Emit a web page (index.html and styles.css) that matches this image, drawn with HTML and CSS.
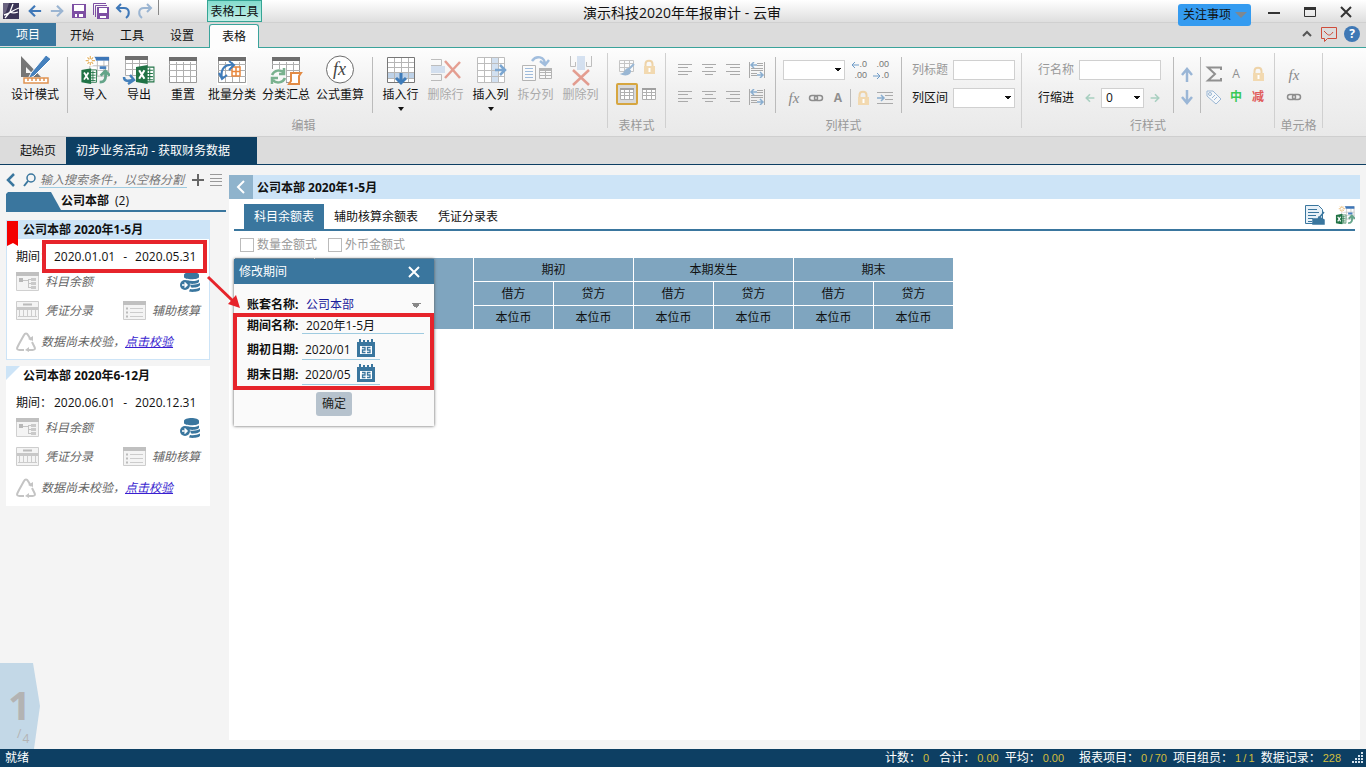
FILE: index.html
```html
<!DOCTYPE html>
<html lang="zh-CN">
<head>
<meta charset="utf-8">
<title>演示科技2020年年报审计 - 云审</title>
<link rel="stylesheet" href="styles.css">
</head>
<body>
<svg class="defs" aria-hidden="true">
  <defs>
    <symbol id="i-left" viewBox="0 0 16 16"><path d="M15 8H2M8 2L2 8l6 6" fill="none" stroke="currentColor" stroke-width="2.500"/></symbol>
    <symbol id="i-right" viewBox="0 0 16 16"><path d="M1 8h13M8 2l6 6-6 6" fill="none" stroke="currentColor" stroke-width="2.500"/></symbol>
    <symbol id="i-undo" viewBox="0 0 16 16"><path d="M6 1L2 5l4 4M2 5h7c6 0 6 7 2 10" fill="none" stroke="currentColor" stroke-width="2"/></symbol>
    <symbol id="i-redo" viewBox="0 0 16 16"><path d="M10 1l4 4-4 4M14 5H7c-6 0-6 7-2 10" fill="none" stroke="currentColor" stroke-width="2"/></symbol>
    <symbol id="i-sheet" viewBox="0 0 30 30"><path d="M1.500 2.500h27v25h-27z" fill="#fff" stroke="#999"/><path d="M1 9.500h28M1 15.500h28M1 21.500h28M8.500 7v20M15.500 7v20M22.500 7v20" stroke="#b0b0b0"/><path d="M1 2h28v4H1z" fill="#6e6e6e"/></symbol>
    <symbol id="i-excel" viewBox="0 0 18 18"><path d="M8 2h9v14H8z" fill="#fff" stroke="#217346"/><path d="M10 5h6M10 8h6M10 11h6M10 14h6M13 3v12" stroke="#217346"/><path d="M0 2l11-2v18L0 16z" fill="#217346"/><path d="M3 5l5 8M8 5l-5 8" stroke="#fff" stroke-width="2"/></symbol>
    <symbol id="i-lock" viewBox="0 0 16 16"><path d="M4.500 8V5c0-4.500 7-4.500 7 0v3" fill="none" stroke="#eed3a8" stroke-width="2"/><path d="M3 7h11v8H3z" fill="#f2d9b0"/><path d="M8.500 9v4" stroke="#fff" stroke-width="2"/></symbol>
    <symbol id="i-al" viewBox="0 0 16 16"><path d="M1 2.500h14M1 5.500h10M1 9.500h14M1 12.500h10" stroke="#aaa"/></symbol>
    <symbol id="i-ac" viewBox="0 0 16 16"><path d="M1 2.500h14M4 5.500h8M1 9.500h14M4 12.500h8" stroke="#aaa"/></symbol>
    <symbol id="i-ar" viewBox="0 0 16 16"><path d="M1 2.500h14M5 5.500h10M1 9.500h14M5 12.500h10" stroke="#aaa"/></symbol>
    <symbol id="i-aw" viewBox="0 0 16 16"><path d="M.5 0v16M15.500 0v16M8 1.500h6M8 3.500h6M2 6.500h12M2 8.500h12M2 11.500h6M2 13.500h6" stroke="#aaa"/><path d="M8 3H2M5 0L2 3l3 3M8 13h6M11 10l3 3-3 3" fill="none" stroke="#8aaed0" stroke-width="1.500"/></symbol>
    <symbol id="i-link" viewBox="0 0 16 16"><rect x="1.500" y="5.500" width="8" height="5" rx="2.500" fill="none" stroke="#8d8d8d" stroke-width="1.500"/><rect x="6.500" y="5.500" width="8" height="5" rx="2.500" fill="none" stroke="#8d8d8d" stroke-width="1.500"/></symbol>
    <symbol id="i-grid" viewBox="0 0 16 16"><path d="M1.500 2.500h13v11h-13zM1 6.500h13M1 9.500h13M5.500 3v11M10.500 3v11" fill="#fff" stroke="#b0b0b0"/><path d="M1 2h14v2H1z" fill="#a0a0a0"/></symbol>
    <symbol id="i-subject" viewBox="0 0 24 20"><path d="M.5.500h22v18h-22z" fill="#f4f4f4" stroke="#d0d0d0"/><path d="M0 0h23v4H0z" fill="#c0c0c0"/><path d="M3 6h4v4H3z" fill="#b8b8b8"/><path d="M7 8.500h5M12.500 7v8.500M12 7.500h3M12 15.500h3M12 11.500h3" fill="none" stroke="#c4c4c4"/><path d="M15 6h5v3h-5zM15 10h5v3h-5zM15 14h5v3h-5z" fill="#cacaca"/></symbol>
    <symbol id="i-voucher" viewBox="0 0 24 20"><path d="M.5.500h22v18h-22z" fill="#f4f4f4" stroke="#cdcdcd"/><path d="M7 3.500h9" stroke="#bbb" stroke-width="2"/><path d="M1 6h21v3H1z" fill="#c8c8c8"/><path d="M3.500 9v7M7.500 9v7M11.500 9v7M15.500 9v7M19.500 9v7M2 15.500h19" stroke="#ccc"/></symbol>
    <symbol id="i-assist" viewBox="0 0 24 20"><path d="M.5.500h22v18h-22z" fill="#f4f4f4" stroke="#cdcdcd"/><path d="M0 0h23v4H0z" fill="#c0c0c0"/><path d="M3 7.500h2M3 11.500h2M3 15.500h2" stroke="#bbb" stroke-width="2"/><path d="M7 7.500h13M7 11.500h13M7 15.500h13" stroke="#ccc"/></symbol>
    <symbol id="i-recycle" viewBox="0 0 20 20"><path d="M3 12L8 3c1-2 3-2 4 0l3 5M16 10l2.500 5c1 2 0 3-2 3H12M8 18H3.500c-2 0-3-1-2-3L3 12" fill="none" stroke="#c4c4c4" stroke-width="2"/><path d="M17 4v5l-5-2zM13 15v5l-4-2z" fill="#c4c4c4"/></symbol>
    <symbol id="i-coins" viewBox="0 0 20 20"><path d="M4 3c0-4 15-4 15 0v2c0 3-15 3-15 0zM7 8c4 1.500 8 1.500 12-.5v2c0 2-6 3-10 2zM10 12.500c4 .5 7 0 10-1.500v2c0 2-6 3-9 2.500zM10 17c4 .5 7 0 10-1.500v2c0 2-7 3-11 2z" fill="#3a769e"/><circle cx="5" cy="13" r="5" fill="#3a769e"/><path d="M2 13h5M4.500 10.500L7 13l-2.500 2.500" fill="none" stroke="#fff" stroke-width="1.500"/></symbol>
    <symbol id="i-cal" viewBox="0 0 18 18"><path d="M0 3h2V0h2v3h2V1h2v2h2V1h2v2h2V0h2v3h2v15H0z" fill="#3a769e"/><path d="M3 7h12v8H3z" fill="#fff"/><path d="M5 8.500h3v2.500H5.500v2.500H8.500M13.500 8.500H10.500v2.500h2.500v2.500h-3" fill="none" stroke="#3a769e" stroke-width="1.300"/></symbol>
    <symbol id="i-import" viewBox="0 0 32 30"><path d="M10.500 1.500h20v20h-20z" fill="#fff" stroke="#aaa"/><path d="M11 10.500h20M11 15.500h20M18.500 5v16M25.500 5v16" stroke="#bbb"/><path d="M15 1h16v4H15z" fill="#3d76b8"/><path d="M21 11h7v3h-7z" fill="#4a82c0"/><circle cx="11" cy="5" r="6" fill="#fff"/><path d="M11 0v10M6 5h10M8 1.500l6 7M14 1.500l-6 7" stroke="#e6b466" stroke-width="1.300"/><circle cx="11" cy="5" r="1.800" fill="#fff"/><use href="#i-excel" x="0" y="13" width="20" height="17"/><path d="M21 28c6 0 7-4 6-11M22 21l5-5 5 5" fill="none" stroke="#64a489" stroke-width="3"/></symbol>
  </defs>
</svg>

<header class="titlebar">
  <div class="quick">
    <svg class="s18" viewBox="0 0 18 18"><path d="M1 1h16v16H1z" fill="#3b3556"/><path d="M1 1h6L4 10l-3 3z" fill="#6a6380"/><path d="M2 13c5-1 9-5 15-7M11 2L8 10 3 16M8 10c2 1 5 1 8 0" stroke="#fff" fill="none" stroke-width="1.300"/></svg>
    <button class="qbtn blue" aria-label="后退"><svg class="s14"><use href="#i-left"/></svg></button>
    <button class="qbtn pale" aria-label="前进"><svg class="s14"><use href="#i-right"/></svg></button>
    <button class="qbtn" aria-label="保存"><svg class="s16" viewBox="0 0 16 16"><path d="M1 1h14v14H1z" fill="#7d4fa3"/><path d="M3 2h10v6H3zM4 11h8v3H4z" fill="#fff"/><path d="M6 11h2v3H6z" fill="#7d4fa3"/></svg></button>
    <button class="qbtn" aria-label="全部保存"><svg class="s18" viewBox="0 0 18 18"><path d="M1.500 13V1.500H14M3.500 15V3.500H15" fill="none" stroke="#7d4fa3"/><path d="M5 5h12v12H5z" fill="#7d4fa3"/><path d="M7 6h8v5H7zM8 14h6v2H8z" fill="#fff"/></svg></button>
    <button class="qbtn blue" aria-label="撤销"><svg class="s16"><use href="#i-undo"/></svg></button>
    <button class="qbtn pale" aria-label="重做"><svg class="s16"><use href="#i-redo"/></svg></button>
    <span class="qsep"></span>
  </div>
  <div class="context">表格工具</div>
  <h1 class="apptitle">演示科技2020年年报审计 - 云审</h1>
  <div class="window">
    <button class="notice">关注事项<span class="tri"></span></button>
    <button aria-label="最小化"><svg class="s14" viewBox="0 0 14 14"><path d="M1 8h12" stroke="#333" stroke-width="2"/></svg></button>
    <button aria-label="最大化"><svg class="s14" viewBox="0 0 14 14"><path d="M1.500 2.500h11v9h-11z" fill="none" stroke="#333"/><path d="M1 2h12v3H1z" fill="#333"/></svg></button>
    <button aria-label="关闭"><svg class="s14" viewBox="0 0 14 14"><path d="M2 2l10 10M12 2L2 12" stroke="#333" stroke-width="2"/></svg></button>
  </div>
</header>

<nav class="menu">
  <button class="project">项目</button>
  <button>开始</button>
  <button>工具</button>
  <button>设置</button>
  <button class="current">表格</button>
  <div class="help">
    <svg class="s14" viewBox="0 0 14 14"><path d="M3 9l4-4 4 4" fill="none" stroke="#555" stroke-width="2"/></svg>
    <svg class="s16" viewBox="0 0 16 16"><path d="M.5 1.500h15v11h-9l-3 3v-3h-3z" fill="none" stroke="#cf4c3a"/><path d="M3 5l3 3c2 2 4 1 6-2" fill="none" stroke="#cf4c3a"/></svg>
    <span class="question">?</span>
  </div>
</nav>

<section class="ribbon">
  <div class="group">
    <div class="tools">
      <button class="big wide"><svg viewBox="0 0 30 30"><path d="M1 1v21h20zM6 12l6 6H6z" fill="#767676" fill-rule="evenodd"/><path d="M26 0l5 4-17 17-6 3 3-6z" fill="#4681bd" stroke="#fff"/><path d="M4 23h24v5H4zM8 23v3M12 23v3M16 23v3M20 23v3M24 23v3" fill="#fff" stroke="#df9251" stroke-width="1.500"/></svg>设计模式</button>
      <span class="sep"></span>
      <button class="big"><svg viewBox="0 0 32 30"><use href="#i-import"/></svg>导入</button>
      <button class="big"><svg viewBox="0 0 30 30"><path d="M1.500 1.500h22v19h-22zM2 8.500h22M2 14.500h22M8.500 1v20M15.500 1v20" fill="#fff" stroke="#b0b0b0"/><path d="M1 1h23v4H1z" fill="#6e6e6e"/><use href="#i-excel" x="12" y="10" width="19" height="19"/><path d="M0 22c0 5 5 4 9 3M6 20l4 5-6 4" fill="none" stroke="#4480bb" stroke-width="2.500"/></svg>导出</button>
      <button class="big"><svg><use href="#i-sheet"/></svg>重置</button>
      <button class="big wide"><svg viewBox="0 0 30 30"><path d="M0 0h30v30H0z" fill="#fff"/><use href="#i-sheet"/><path d="M15 12h8v9h-8zM19 12v9M15 16.500h8" fill="#fff" stroke="#e8873d" stroke-width="1.500"/><path d="M5 23C3 14 8 9 16 10M12 6l5 4-5 5M2 18l3 6 5-4" fill="none" stroke="#3f7cba" stroke-width="2"/></svg>批量分类</button>
      <button class="big wide"><svg viewBox="0 0 30 30"><use href="#i-sheet"/><path d="M0 14h15v16H0z" fill="#f8f8f8"/><path d="M1 20c2-5 9-6 12-2M13 13v6H8M14 23c-2 5-9 6-12 2M1 29v-6h6" fill="none" stroke="#7ab28f" stroke-width="2.500"/><path d="M20 18h10l-2 3v8H18l2-3z" fill="#fff" stroke="#e28b45" stroke-width="2"/></svg>分类汇总</button>
      <button class="big wide"><svg viewBox="0 0 30 30"><circle cx="15" cy="14.500" r="13.500" fill="#fff" stroke="#6c6c6c"/><text x="8" y="20" class="fx-big">fx</text></svg>公式重算</button>
      <span class="sep"></span>
      <button class="big col"><svg viewBox="0 0 30 30"><path d="M1 2h28v26H1z" fill="#fff"/><path d="M1 17h28v6H1z" fill="#bed2e8"/><path d="M1 7.500h28M1 12.500h28M1 17.500h28M1 23.500h28M8.500 2v26M15.500 2v26M22.500 2v26" stroke="#b5b5b5"/><path d="M1.500 2.500h27v25h-27z" fill="none" stroke="#777"/><path d="M15 18v9M10 23l5 5 5-5" fill="none" stroke="#3f7cba" stroke-width="3"/></svg>插入行<i class="drop"></i></button>
      <button class="big col off"><svg viewBox="0 0 30 30"><path d="M0 4.500h10.500v6H0M0 25.500h10.500v-6H0" fill="none" stroke="#777"/><path d="M0 11h14v7H0z" fill="#a9c4e6"/><path d="M14 6l15 17M29 7L14 23" stroke="#cf3418" stroke-width="2.500"/></svg>删除行</button>
      <button class="big col"><svg viewBox="0 0 30 30"><path d="M1 2h28v26H1z" fill="#fff"/><path d="M15 2h7v26h-7z" fill="#d2e0f0"/><path d="M1.500 2.500h27v25h-27zM1 8.500h28M1 15.500h28M1 21.500h28M8.500 2v26M15.500 2v26M22.500 2v26" fill="none" stroke="#bdbdbd"/><path d="M19 15h9M24 10l5 5-5 5" fill="none" stroke="#7ba6d1" stroke-width="2.500"/></svg>插入列<i class="drop"></i></button>
      <button class="big col off"><svg viewBox="0 0 30 30"><path d="M1.500 10.500h13v15h-13z" fill="#fff" stroke="#666"/><path d="M4 13.500h8M4 16.500h8M4 19.500h8M4 22.500h8" stroke="#3876bd"/><path d="M18.500 13.500h12v10h-12zM18 17.500h12M18 20.500h12M24.500 14v10" fill="#fff" stroke="#666"/><path d="M18 13h13v3H18z" fill="#666"/><path d="M11 6c4-6 13-5 13 4M19 6l5 4 4-5" fill="none" stroke="#3876bd" stroke-width="2.500"/></svg>拆分列</button>
      <button class="big col off"><svg viewBox="0 0 30 30"><path d="M4.500 1v10.500h5V7M20.500 7v4.500h5V1" fill="none" stroke="#777"/><path d="M11 1h8v14h-8z" fill="#a9c4e6"/><path d="M7 15l16 15M23 15L7 30" stroke="#cf3418" stroke-width="2.500"/></svg>删除列</button>
    </div>
    <div class="caption">编辑</div>
  </div>

  <div class="group">
    <div class="tools tablestyle">
      <button class="ib off" aria-label="表格样式"><svg viewBox="0 0 16 16"><path d="M.5 1.500h14v11H.5zM0 4.500h15M0 8.500h12M5.500 1v11M10.500 1v9" fill="#fff" stroke="#888"/><path d="M15 5l-6 6M9 10c-3 0-2 4-5 5 3 1 7 0 7-3z" fill="#2b6cab" stroke="#2b6cab" stroke-width="2"/></svg></button>
      <button class="ib" aria-label="锁定"><svg><use href="#i-lock"/></svg></button>
      <button class="ib chosen" aria-label="显示网格"><svg><use href="#i-grid"/></svg></button>
      <button class="ib" aria-label="隐藏网格"><svg><use href="#i-grid"/></svg></button>
    </div>
    <div class="caption">表样式</div>
  </div>

  <div class="group">
    <div class="tools colstyle">
      <div class="aligns">
        <button class="ib"><svg><use href="#i-al"/></svg></button><button class="ib"><svg><use href="#i-ac"/></svg></button><button class="ib"><svg><use href="#i-ar"/></svg></button><button class="ib"><svg><use href="#i-aw"/></svg></button>
        <button class="ib"><svg><use href="#i-al"/></svg></button><button class="ib"><svg><use href="#i-ac"/></svg></button><button class="ib"><svg><use href="#i-ar"/></svg></button><button class="ib"><svg><use href="#i-aw"/></svg></button>
      </div>
      <span class="sep"></span>
      <div class="stack format">
        <div class="line">
          <select class="sel w62" aria-label="数字格式"><option></option></select>
          <button class="ib decimal"><span><svg viewBox="0 0 8 6"><path d="M8 3H1M4 0L1 3l3 3" fill="none" stroke="#6f9cc8"/></svg>.0</span><span>.00</span></button>
          <button class="ib decimal"><span>.00</span><span><svg viewBox="0 0 8 6"><path d="M0 3h7M4 0l3 3-3 3" fill="none" stroke="#6f9cc8"/></svg>.0</span></button>
        </div>
        <div class="line">
          <button class="ib fx">fx</button><button class="ib"><svg><use href="#i-link"/></svg></button><button class="ib letter bold">A</button>
          <span class="sep short"></span>
          <button class="ib"><svg><use href="#i-lock"/></svg></button>
          <button class="ib"><svg viewBox="0 0 16 16"><path d="M0 2.500h16M8 5.500h8M8 9.500h8M0 13.500h16" stroke="#aaa"/><path d="M0 8h7M4 5l3 3-3 3" fill="none" stroke="#8aaed0" stroke-width="1.500"/></svg></button>
        </div>
      </div>
      <span class="sep"></span>
      <div class="stack fields">
        <div class="line"><label class="dim" for="coltitle">列标题</label><input id="coltitle" class="box w62"></div>
        <div class="line"><label for="colrange">列区间</label><select id="colrange" class="sel w62"><option></option></select></div>
      </div>
    </div>
    <div class="caption">列样式</div>
  </div>

  <div class="group">
    <div class="tools rowstyle">
      <div class="stack fields">
        <div class="line"><label class="dim" for="rowname">行名称</label><input id="rowname" class="box w82"></div>
        <div class="line"><label for="indent">行缩进</label><button class="ib mint" aria-label="减少缩进"><svg class="s10"><use href="#i-left"/></svg></button><select id="indent" class="sel w42"><option>0</option></select><button class="ib mint" aria-label="增加缩进"><svg class="s10"><use href="#i-right"/></svg></button></div>
      </div>
      <span class="sep"></span>
      <div class="updown">
        <button class="ib"><svg viewBox="0 0 16 16"><path d="M8 15V3M3 8l5-6 5 6" fill="none" stroke="#9ab6d6" stroke-width="2.500"/></svg></button>
        <button class="ib"><svg viewBox="0 0 16 16"><path d="M8 1v12M3 8l5 6 5-6" fill="none" stroke="#9ab6d6" stroke-width="2.500"/></svg></button>
      </div>
      <span class="sep"></span>
      <div class="marks">
        <button class="ib"><svg viewBox="0 0 16 16"><path d="M15 4V1.500H2L9 8l-7 6.500h13V12" fill="none" stroke="#909090" stroke-width="2"/></svg></button>
        <button class="ib letter">A</button>
        <button class="ib"><svg><use href="#i-lock"/></svg></button>
        <button class="ib"><svg viewBox="0 0 16 16"><path d="M1 2h6l8 8-5 5-9-8zM6 9l3-3M8 11l3-3" fill="#f4f7fa" stroke="#9bb7d4"/><circle cx="4" cy="5" r="1.500" fill="none" stroke="#9bb7d4"/></svg></button>
        <button class="ib green">中</button>
        <button class="ib red">减</button>
      </div>
    </div>
    <div class="caption">行样式</div>
  </div>

  <div class="group">
    <div class="tools cellstyle">
      <button class="ib fx">fx</button>
      <button class="ib"><svg><use href="#i-link"/></svg></button>
    </div>
    <div class="caption">单元格</div>
  </div>
</section>

<nav class="pages">
  <button>起始页</button>
  <button class="active">初步业务活动 - 获取财务数据</button>
</nav>

<main class="main">
  <aside class="side">
    <div class="search">
      <button class="chev" aria-label="收起"><svg viewBox="0 0 10 14"><path d="M8 1L2 7l6 6" fill="none" stroke="#3a769e" stroke-width="2.500"/></svg></button>
      <svg class="s14" viewBox="0 0 14 14"><circle cx="8" cy="5" r="4" fill="none" stroke="#3a769e" stroke-width="1.500"/><path d="M5 8l-4 5" stroke="#3a769e" stroke-width="2"/></svg>
      <input aria-label="搜索" placeholder="输入搜索条件，以空格分割">
      <button class="plus" aria-label="新增"><svg class="s12" viewBox="0 0 12 12"><path d="M6 0v12M0 6h12" stroke="#666" stroke-width="2"/></svg></button>
      <button aria-label="菜单"><svg class="s12" viewBox="0 0 12 12"><path d="M0 .5h12M0 4.500h12M0 7.500h12M0 11.500h12" stroke="#999"/></svg></button>
    </div>
    <div class="unit"><span class="flag"></span><b>公司本部</b><span>(2)</span></div>

    <article class="card picked">
      <svg class="ribbonmark" viewBox="0 0 11 26"><path d="M0 0h11v25l-5-3-6 3z" fill="#f40000"/></svg>
      <h2>公司本部 2020年1-5月</h2>
      <div class="period"><span>期间：</span><span>2020.01.01</span><span>-</span><span>2020.05.31</span><i class="mark date"></i></div>
      <div class="row short"><svg class="doc"><use href="#i-subject"/></svg><span>科目余额</span><svg class="coins"><use href="#i-coins"/></svg></div>
      <div class="row"><svg class="doc"><use href="#i-voucher"/></svg><span>凭证分录</span><svg class="doc second"><use href="#i-assist"/></svg><span>辅助核算</span></div>
      <div class="row check"><svg class="cycle"><use href="#i-recycle"/></svg><span>数据尚未校验，<a href="#">点击校验</a></span></div>
    </article>

    <article class="card">
      <span class="corner"></span>
      <h2>公司本部 2020年6-12月</h2>
      <div class="period"><span>期间：</span><span>2020.06.01</span><span>-</span><span>2020.12.31</span></div>
      <div class="row short"><svg class="doc"><use href="#i-subject"/></svg><span>科目余额</span><svg class="coins"><use href="#i-coins"/></svg></div>
      <div class="row"><svg class="doc"><use href="#i-voucher"/></svg><span>凭证分录</span><svg class="doc second"><use href="#i-assist"/></svg><span>辅助核算</span></div>
      <div class="row check"><svg class="cycle"><use href="#i-recycle"/></svg><span>数据尚未校验，<a href="#">点击校验</a></span></div>
    </article>

    <div class="pager"><b>1</b><div class="total"><span>/</span><span class="count">4</span></div></div>
  </aside>

  <section class="panel">
    <div class="heading">
      <button aria-label="返回"><svg viewBox="0 0 10 14"><path d="M8 1L2 7l6 6" fill="none" stroke="#fff" stroke-width="2"/></svg></button>
      <h2>公司本部 2020年1-5月</h2>
    </div>
    <div class="tabs">
      <button class="on">科目余额表</button>
      <button>辅助核算余额表</button>
      <button>凭证分录表</button>
      <div class="actions">
        <button aria-label="编辑报表"><svg viewBox="0 0 20 20"><path d="M.5.500h13l4 4v14H.5z" fill="#e8f1f8" stroke="#3a769e"/><path d="M3 4.500h9M3 7.500h11M3 10.500h8M3 13.500h5M3 16.500h4" stroke="#3a769e"/><path d="M19 7l-5 6M8 14h5l1-2 5 3v4H8z" fill="#3a769e" stroke="#3a769e" stroke-width="1.500"/></svg></button>
        <button aria-label="导入数据"><svg viewBox="0 0 32 30"><use href="#i-import"/></svg></button>
      </div>
    </div>
    <div class="options">
      <label><input type="checkbox">数量金额式</label>
      <label><input type="checkbox">外币金额式</label>
    </div>
    <table class="ledger">
      <colgroup><col><col class="name"><col><col><col><col><col><col></colgroup>
      <thead>
        <tr><th rowspan="3"></th><th rowspan="3"></th><th colspan="2">期初</th><th colspan="2">本期发生</th><th colspan="2">期末</th></tr>
        <tr><th>借方</th><th>贷方</th><th>借方</th><th>贷方</th><th>借方</th><th>贷方</th></tr>
        <tr><th>本位币</th><th>本位币</th><th>本位币</th><th>本位币</th><th>本位币</th><th>本位币</th></tr>
      </thead>
    </table>

    <form class="dialog">
      <div class="dhead"><span>修改期间</span><button type="button" aria-label="关闭"><svg class="s12" viewBox="0 0 12 12"><path d="M1 1l10 10M11 1L1 11" stroke="#fff" stroke-width="2"/></svg></button></div>
      <div class="field first"><label for="book">账套名称:</label><select id="book" class="book"><option>公司本部</option></select></div>
      <div class="field name"><label for="pname">期间名称:</label><input id="pname" class="long" value="2020年1-5月"></div>
      <div class="field"><label for="from">期初日期:</label><span class="datebox"><input id="from" value="2020/01"><svg><use href="#i-cal"/></svg></span></div>
      <div class="field"><label for="to">期末日期:</label><span class="datebox"><input id="to" value="2020/05"><svg><use href="#i-cal"/></svg></span></div>
      <button type="button" class="ok">确定</button>
      <i class="mark fields-mark"></i>
      <svg class="pointer" viewBox="0 0 36 36"><path d="M2 2l26 25" stroke="#e6242b" stroke-width="3"/><path d="M34 33l-12-4 8-9z" fill="#e6242b"/></svg>
    </form>
  </section>
</main>

<footer class="status">
  <span class="ready">就绪</span>
  <span class="stat">计数：<b>0</b></span>
  <span class="stat near">合计：<b>0.00</b></span>
  <span class="stat">平均：<b>0.00</b></span>
  <span class="stat far">报表项目：<b>0&thinsp;/&thinsp;70</b></span>
  <span class="stat">项目组员：<b>1&thinsp;/&thinsp;1</b></span>
  <span class="stat">数据记录：<b>228</b></span>
  <svg class="grip" viewBox="0 0 12 12"><path d="M9 1h2M9 4h2M6 4h2M9 7h2M6 7h2M3 7h2M9 10h2M6 10h2M3 10h2M0 10h2" stroke="#d5e3ee" stroke-width="2"/></svg>
</footer>
</body>
</html>
```

FILE: styles.css
```css
* { box-sizing: border-box; }
body {
  margin: 0;
  min-height: 100vh;
  display: flex;
  flex-direction: column;
  background: #f4f4f4;
  color: #111;
  font: 12px/16px "Open Sans", "Noto Sans CJK SC", sans-serif;
}
button, input, select { font: inherit; color: inherit; margin: 0; padding: 0; }
button { border: 0; background: none; white-space: nowrap; }
h1, h2 { margin: 0; font-weight: normal; }
svg { display: block; flex: none; overflow: visible; }
.defs { position: absolute; width: 0; height: 0; }
.s10 { width: 10px; height: 10px; }
.s12 { width: 12px; height: 12px; }
.s14 { width: 14px; height: 14px; }
.s16 { width: 16px; height: 16px; }
.s18 { width: 18px; height: 18px; }

/* title bar */
.titlebar {
  display: flex;
  justify-content: space-between;
  height: 23px;
  background: linear-gradient(#fff, #dedede);
  border-bottom: 1px solid #d0d0d0;
}
.quick { display: flex; align-items: center; padding-left: 2px; }
.qbtn { width: 22px; display: flex; justify-content: center; }
.quick > svg { margin-right: 4px; }
.blue { color: #3f78b8; }
.pale { color: #9bb5d2; }
.qsep { width: 1px; height: 15px; align-self: flex-start; background: #888; margin-left: 2px; }
.context {
  width: 55px;
  margin-left: 48px;
  text-align: center;
  line-height: 21px;
  border: 1px solid #35a595;
  background: linear-gradient(#84dccd, #c4efe8);
  white-space: nowrap;
}
.apptitle { flex: 1; text-align: center; font-size: 14px; line-height: 26px; padding-right: 76px; }
.window { display: flex; align-items: flex-start; gap: 22px; padding: 5px 13px 0 0; }
.notice {
  z-index: 2;
  height: 22px;
  width: 73px;
  margin-top: -1px;
  margin-right: -6px;
  display: flex;
  align-items: center;
  gap: 4px;
  padding-left: 5px;
  border-radius: 3px;
  background: #349bf0;
}
.tri { border: 6px solid transparent; border-top-color: #7f8890; border-bottom: 0; }

/* menu row */
.menu { display: flex; align-items: stretch; height: 25px; background: #dcdcdc; border-bottom: 1px solid #3aa39b; }
.menu button { width: 50px; line-height: 26px; }
.menu .project { width: 56px; background: #3a769e; color: #fff; height: 23px; line-height: 22px; margin-right: 1px; }
.menu .current {
  margin: 1px 0 -1px 2px;
  line-height: 24px;
  background: #fdfdfd;
  border: 1px solid #3aa39b;
  border-bottom: 0;
  border-radius: 3px 3px 0 0;
}
.help { margin-left: auto; display: flex; align-items: center; gap: 7px; padding: 0 6px 2px 0; }
.question { width: 16px; height: 16px; border-radius: 8px; background: #3f78b5; color: #fff; font-weight: bold; text-align: center; }

/* ribbon */
.ribbon {
  display: flex;
  height: 89px;
  background: linear-gradient(#fdfdfd, #f1f1f1 45%, #e9e9e9);
  border-bottom: 1px solid #cfcfcf;
}
.group { position: relative; display: flex; flex-direction: column; padding-right: 1px; }
.group::after { content: ""; position: absolute; right: 0; top: 5px; bottom: 8px; width: 1px; background: #d0d0d0; }
.tools { display: flex; height: 68px; }
.caption { text-align: center; color: #999; line-height: 20px; }
.sep { width: 1px; flex: none; background: #bbb; margin: 9px 5px 3px; }
.big { width: 44px; display: flex; flex-direction: column; align-items: center; padding-top: 7px; line-height: 17px; }
.big svg { width: 30px; height: 30px; margin-bottom: 1px; }
.big.wide { width: 54px; }
.big.col { width: 45px; }
.off { color: #aaa; }
.off svg { opacity: .45; }
.drop { border: 3px solid transparent; border-top: 4px solid #111; border-bottom: 0; margin-top: 4px; }
.group:first-child .tools { padding-left: 8px; padding-right: 4px; }
.fx-big { font: italic 18px "Liberation Serif", serif; fill: #444; }
.ib { width: 22px; height: 22px; display: flex; align-items: center; justify-content: center; flex: none; }
.ib > svg:not(.s10) { width: 16px; height: 16px; }
.tablestyle { display: grid; grid-template-columns: 22px 22px; grid-auto-rows: 22px; row-gap: 5px; padding: 8px 5px 0 8px; }
.chosen { border: 2px solid #d6a640; background: #d9d9d9; border-radius: 2px; }
.aligns { display: grid; grid-template-columns: repeat(4, 24px); grid-auto-rows: 22px; row-gap: 5px; padding: 11px 0 0 8px; }
.stack { display: flex; flex-direction: column; gap: 6px; padding-top: 11px; }
.line { display: flex; align-items: center; height: 22px; }
.format { padding-left: 2px; width: 115px; }
.sel, .box { height: 20px; border: 1px solid #d0d0d0; background-color: #fff; border-radius: 0; }
.sel {
  appearance: none;
  padding-left: 4px;
  background-image:
    linear-gradient(to bottom left, #111 50%, transparent 50%),
    linear-gradient(to bottom right, #111 50%, transparent 50%);
  background-size: 3px 4px;
  background-position: right 6px center, right 3px center;
  background-repeat: no-repeat;
}
.w42 { width: 43px; }
.w62 { width: 62px; }
.w82 { width: 82px; }
.decimal { flex-direction: column; font: 9px/9px "Liberation Sans", sans-serif; color: #777; align-items: flex-end; gap: 2px; height: 24px; }
.decimal span { display: flex; align-items: center; height: 9px; }
.decimal svg { width: 8px; height: 6px; }
.fx { font: italic 15px "Liberation Serif", serif; color: #888; }
.letter { color: #909090; }
.bold { font-weight: bold; }
.sep.short { height: 18px; margin: 0 1px; }
.fields { padding-left: 5px; padding-right: 6px; }
.fields label { width: 36px; margin-right: 5px; }
.dim { color: #999; }
.rowstyle { padding-left: 11px; }
.mint { color: #a8cfc0; }
.rowstyle .stack { padding-right: 2px; }
.updown { display: grid; grid-auto-rows: 22px; padding-top: 16px; margin: 0 -3px; }
.marks { display: grid; grid-template-columns: repeat(3, 22px); grid-auto-rows: 23px; padding: 15px 5px 0 0; margin-left: -3px; }
.green { color: #39c957; font-weight: bold; }
.red { color: #e05a5a; font-weight: bold; }
.cellstyle { width: 47px; flex-direction: column; padding: 16px 0 0 8px; }

/* page tabs */
.pages { display: flex; height: 28px; background: #dcdcdc; border-bottom: 1px solid #0d3f63; }
.pages button { line-height: 28px; padding: 0 10px 0 20px; }
.pages .active { background: #0d3f63; color: #fff; padding: 0 27px 0 10px; }

/* main area */
.main { flex: 1; display: flex; }
.side { width: 229px; flex: none; display: flex; flex-direction: column; padding-top: 6px; }
.search { display: flex; align-items: center; height: 18px; padding-left: 6px; }
.chev svg { width: 10px; height: 14px; margin-right: 7px; }
.search input {
  width: 148px;
  height: 16px;
  margin-left: 2px;
  padding-left: 1px;
  border: 0;
  border-bottom: 1px solid #9fcbe0;
  background: none;
  font-style: italic;
}
.search input::placeholder { color: #777; }
.search .plus { margin: 0 6px 0 5px; }
.unit { display: flex; align-items: center; gap: 6px; height: 23px; margin: 0 3px 8px 6px; border-bottom: 2px solid #3a769e; padding-top: 3px; }
.flag { width: 55px; height: 18px; margin-right: -6px; background: #3a769e; clip-path: polygon(0 2px, 2px 0, 45px 0, 55px 100%, 0 100%); }
.card { position: relative; width: 204px; margin: 0 0 6px 6px; padding-bottom: 3px; background: #fff; }
.picked { outline: 1px solid #cde4f7; outline-offset: -1px; }
.card h2 { font-weight: bold; font-size: 12px; line-height: 19px; padding-left: 17px; }
.picked h2 { background: #cde4f7; }
.ribbonmark { position: absolute; left: 1px; top: 1px; width: 11px; height: 26px; }
.corner { position: absolute; left: 0; top: 0; border: 7px solid #cde4f7; border-right-color: transparent; border-bottom-color: transparent; }
.period { position: relative; display: flex; align-items: center; gap: 8px; height: 26px; margin-top: 5px; margin-bottom: -1px; padding-left: 10px; }
.period span:first-child { width: 30px; white-space: nowrap; }
.row { display: flex; align-items: center; height: 32px; padding: 0 10px; font-style: italic; color: #666; }
.row.short { height: 26px; }
.row.check { height: 30px; }
.doc { width: 24px; height: 20px; margin-right: 5px; }
.second { margin-left: auto; }
.coins { width: 20px; height: 20px; margin-left: auto; }
.cycle { width: 20px; height: 20px; margin-right: 5px; }
.row a { color: #3a1fd0; text-decoration: underline; }
.mark { position: absolute; border: 4px solid #e6242b; }
.date { left: 36px; top: -4px; width: 165px; height: 33px; }
.pager {
  width: 40px;
  height: 86px;
  margin-top: auto;
  background: #c3d8e7;
  clip-path: polygon(0 0, 33px 0, 100% 50%, 34px 100%, 0 100%);
  color: #b3b3b3;
  padding: 20px 0 0 8px;
}
.pager b { display: block; font-size: 40px; line-height: 44px; }
.total { display: flex; gap: 1px; padding-left: 9px; line-height: 14px; }
.count { padding-top: 5px; }

.panel { position: relative; flex: 1; min-width: 0; margin: 10px 6px 9px 0; background: #fff; }
.heading { display: flex; height: 24px; background: #cde4f7; }
.heading button { width: 24px; background: #8fb3cc; display: flex; align-items: center; justify-content: center; }
.heading svg { width: 10px; height: 14px; }
.heading h2 { font-size: 12px; font-weight: bold; line-height: 25px; padding-left: 4px; }
.tabs { display: flex; height: 32px; margin: 0 5px; padding: 5px 0 0 10px; border-bottom: 2px solid #3a769e; }
.tabs > button { padding: 0 10px; line-height: 24px; }
.tabs .on { background: #3a769e; color: #fff; }
.actions { margin-left: auto; display: flex; gap: 10px; }
.actions svg { width: 20px; height: 20px; margin-top: -4px; }
.options { display: flex; gap: 11px; height: 27px; align-items: center; padding-left: 11px; color: #999; }
.options label { display: flex; align-items: center; gap: 3px; }
.options input { appearance: none; width: 14px; height: 14px; border: 1px solid #bbb; background: #fff; }
.ledger { width: 720px; margin-left: 5px; margin-top: -1px; table-layout: fixed; border-collapse: collapse; }
.ledger col { width: 80px; }
.ledger .name { width: auto; }
.ledger th { height: 24px; padding: 0; font-weight: normal; color: #111; background: #7fa5bf; border: 1px solid #fff; }

/* period dialog */
.dialog { position: absolute; left: 5px; top: 84px; width: 200px; height: 167px; background: #fafafa; box-shadow: 0 0 3px #555; }
.dhead { display: flex; justify-content: space-between; align-items: center; height: 25px; padding: 0 14px 0 5px; background: #3a769e; color: #fff; }
.field { display: flex; align-items: center; height: 25px; padding-left: 13px; }
.field label { font-weight: bold; width: 55px; white-space: nowrap; }
.field.first { height: 20px; margin-top: 11px; }
.field.name { height: 22px; }
.field input { border: 0; background: none; height: 17px; padding-left: 4px; }
.field .long { width: 122px; height: 16px; border-bottom: 1px solid #9fcbe0; }
.field .book {
  appearance: none;
  width: 122px;
  border: 0;
  padding-left: 4px;
  color: #1b1b9b;
  background-color: transparent;
  background-image:
    linear-gradient(to bottom left, #888 50%, transparent 50%),
    linear-gradient(to bottom right, #888 50%, transparent 50%);
  background-size: 5px 5px;
  background-position: right 8px center, right 3px center;
  background-repeat: no-repeat;
}
.datebox { display: flex; align-items: center; width: 78px; height: 21px; border-bottom: 1px solid #9fcbe0; }
.datebox input { width: 55px; padding-left: 3px; }
.datebox svg { width: 18px; height: 18px; margin-bottom: 2px; }
.ok { display: block; width: 36px; height: 24px; margin: 5px auto 0; border-radius: 3px; background: #b6c2cd; color: #222; }
.fields-mark { left: -1px; top: 54px; width: 201px; height: 77px; }
.pointer { position: absolute; left: -28px; top: 16px; width: 36px; height: 36px; }

/* status bar */
.status { display: flex; align-items: center; gap: 6px; height: 18px; padding: 0 2px 0 5px; background: #0d3f63; color: #fff; }
.ready { margin-right: auto; }
.stat b { font: 11px "Liberation Sans", sans-serif; color: #d2bd3c; margin-left: 2px; }
.near { margin-left: 4px; }
.far { margin-left: 9px; }
.grip { width: 12px; height: 12px; margin-left: 5px; }
```
